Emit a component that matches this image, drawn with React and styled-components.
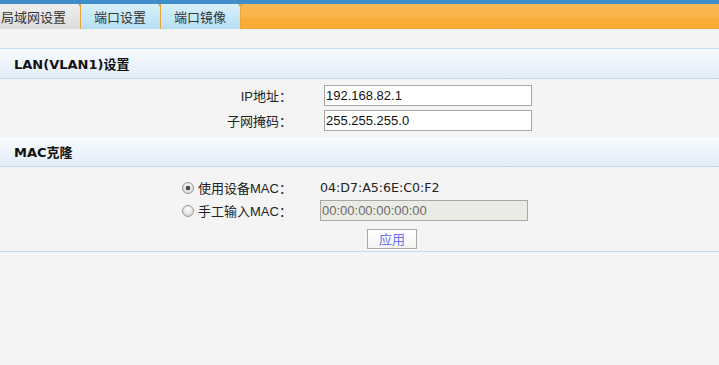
import React from 'react';
import styled, { createGlobalStyle } from 'styled-components';

const GlobalStyle = createGlobalStyle`
  html, body {
    margin: 0;
    padding: 0;
    background: #f4f4f4;
  }
  body {
    font-family: "Liberation Sans", "Noto Sans CJK SC", sans-serif;
    font-size: 13px;
    color: #222;
  }
`;

const Page = styled.div`
  min-height: 361px;
  background: #f4f4f4;
  border-top: 4px solid #3f8dca;
  overflow: hidden;
`;

const TabBar = styled.div`
  display: flex;
  height: 25px;
  background: linear-gradient(#f9b954, #f8b548 50%, #f7ad36 60%, #f7ad34);
`;

const Tab = styled.div`
  position: relative;
  display: flex;
  align-items: center;
  padding: 0 14px 0 13px;
  border-right: 1px solid #eea33a;
  background: ${(p) => (p.$active
    ? 'linear-gradient(#eeeeee, #e6e6e6 50%, #dadada)'
    : 'linear-gradient(#d8effa, #c8e8f7 50%, #b6dff2)')};
  color: #333;
  font-family: "Noto Sans CJK SC", sans-serif;
  font-size: 13px;
  &:first-child {
    margin-left: -12px;
  }
  &::after {
    content: '';
    position: absolute;
    top: 0;
    right: -3px;
    width: 1px;
    border-left: 2px solid transparent;
    border-right: 2px solid transparent;
    border-top: 3px solid #eea33a;
  }
`;

const Spacer = styled.div`
  height: 19px;
`;

const SectionHead = styled.div`
  height: 29px;
  display: flex;
  align-items: center;
  padding-left: 14px;
  border-top: ${(p) => (p.$topLine ? '1px solid #c3dbf1' : 'none')};
  border-bottom: 1px solid #c3dbf1;
  background: linear-gradient(#f8fbff, #eef4fc 50%, #e3ecf8);
  font-family: "DejaVu Sans", "Noto Sans CJK SC", sans-serif;
  font-weight: bold;
  font-size: 13px;
  color: #111;
`;

const SectionBody = styled.div`
  display: flex;
  flex-direction: column;
  gap: ${(p) => p.$gap}px;
  padding: ${(p) => p.$pad};
  border-bottom: ${(p) => (p.$bottomLine ? '1px solid #c9dbec' : 'none')};
`;

const FormRow = styled.div`
  display: grid;
  grid-template-columns: 300px 1fr;
  column-gap: ${(p) => p.$colGap}px;
  align-items: center;
  height: ${(p) => p.$h || 21}px;
`;

const Label = styled.label`
  text-align: right;
  padding-right: 8px;
  font-family: "Liberation Sans", "Noto Sans CJK SC", sans-serif;
  font-size: 13px;
  color: #222;
`;

const RadioLabel = styled.label`
  display: flex;
  align-items: center;
  gap: 4px;
  padding-left: 182px;
  font-family: "Liberation Sans", "Noto Sans CJK SC", sans-serif;
  font-size: 13px;
  color: #222;
`;

const Radio = styled.span`
  flex: none;
  width: 12px;
  height: 12px;
  box-sizing: border-box;
  border-radius: 50%;
  border: 1px solid #999999;
  background: ${(p) => (p.$checked
    ? 'radial-gradient(circle, #474747 0 2px, transparent 2.6px), radial-gradient(circle at 50% 35%, #ffffff, #e0e0e0 60%, #c8c8c8)'
    : 'radial-gradient(circle at 50% 35%, #ffffff, #e0e0e0 60%, #c8c8c8)')};
`;

const TextInput = styled.input`
  box-sizing: border-box;
  width: 208px;
  height: 21px;
  margin: 0;
  padding: 0 1px;
  border: 1px solid #a7a7a7;
  background: ${(p) => (p.disabled ? '#ebebe5' : '#ffffff')};
  color: ${(p) => (p.disabled ? '#6a6a6a' : '#111')};
  font-family: "Liberation Sans", sans-serif;
  font-size: 13px;
  outline: none;
`;

const MacValue = styled.span`
  font-family: "DejaVu Sans", sans-serif;
  font-size: 12.6px;
  color: #222;
`;

const ButtonCell = styled.div`
  align-self: end;
`;

const ApplyButton = styled.button`
  box-sizing: border-box;
  width: 50px;
  height: 20px;
  margin: 0 0 0 47px;
  padding: 0;
  border: 1px solid #a9a9a9;
  background: linear-gradient(#ffffff, #f3f3f3);
  color: #6c74f0;
  font-family: "Noto Sans CJK SC", sans-serif;
  font-size: 13px;
  line-height: 18px;
`;

export default function App() {
  return (
    <Page>
      <GlobalStyle />
      <TabBar>
        <Tab $active>局域网设置</Tab>
        <Tab>端口设置</Tab>
        <Tab>端口镜像</Tab>
      </TabBar>
      <Spacer />

      <SectionHead $topLine>LAN(VLAN1)设置</SectionHead>
      <SectionBody $gap={4} $pad="6px 0 6px">
        <FormRow $colGap={24}>
          <Label htmlFor="ip">IP地址：</Label>
          <TextInput id="ip" defaultValue="192.168.82.1" />
        </FormRow>
        <FormRow $colGap={24}>
          <Label htmlFor="mask">子网掩码：</Label>
          <TextInput id="mask" defaultValue="255.255.255.0" />
        </FormRow>
      </SectionBody>

      <SectionHead>MAC克隆</SectionHead>
      <SectionBody $gap={2} $pad="10px 0 2px" $bottomLine>
        <FormRow $colGap={20}>
          <RadioLabel>
            <Radio $checked />
            使用设备MAC：
          </RadioLabel>
          <MacValue>04:D7:A5:6E:C0:F2</MacValue>
        </FormRow>
        <FormRow $colGap={20}>
          <RadioLabel>
            <Radio />
            手工输入MAC：
          </RadioLabel>
          <TextInput disabled defaultValue="00:00:00:00:00:00" />
        </FormRow>
        <FormRow $colGap={20} $h={26}>
          <span />
          <ButtonCell>
            <ApplyButton type="button">应用</ApplyButton>
          </ButtonCell>
        </FormRow>
      </SectionBody>
    </Page>
  );
}
